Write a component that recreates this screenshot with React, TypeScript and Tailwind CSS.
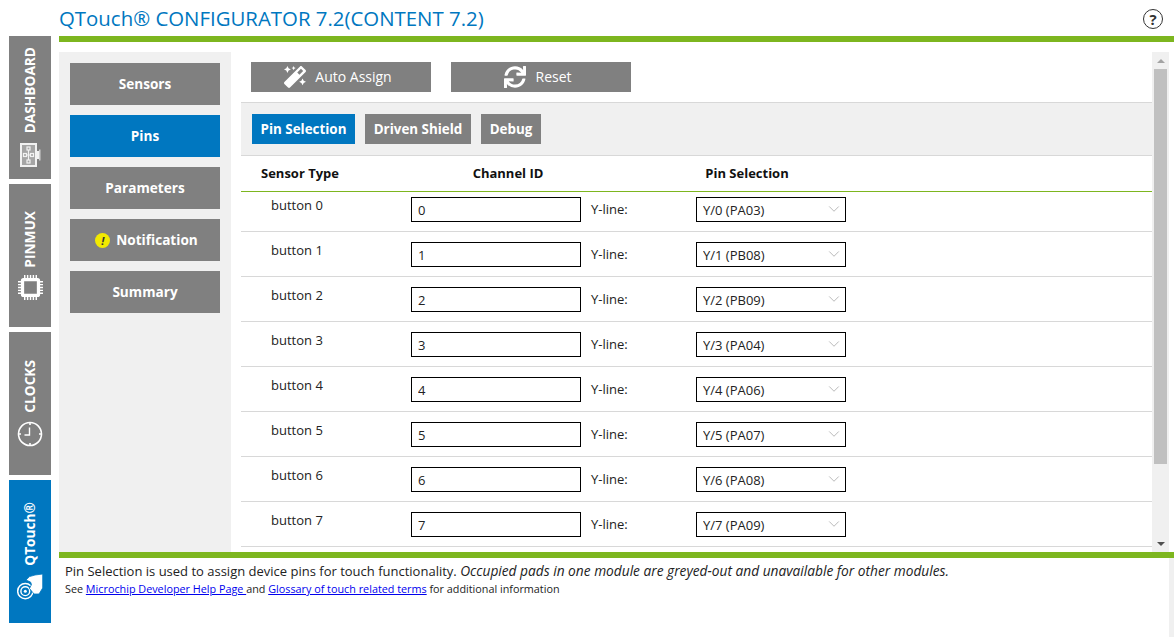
import { FaMagic, FaSync } from "react-icons/fa";
import { ChevronDown } from "lucide-react";

const rows = [
  { id: 0, pin: "Y/0 (PA03)" },
  { id: 1, pin: "Y/1 (PB08)" },
  { id: 2, pin: "Y/2 (PB09)" },
  { id: 3, pin: "Y/3 (PA04)" },
  { id: 4, pin: "Y/4 (PA06)" },
  { id: 5, pin: "Y/5 (PA07)" },
  { id: 6, pin: "Y/6 (PA08)" },
  { id: 7, pin: "Y/7 (PA09)" },
];

function BoardIcon() {
  return (
    <svg width="21" height="24" viewBox="0 0 21 24" fill="none" stroke="#f2f2f2">
      <rect x="1" y="1" width="15" height="22" strokeWidth="2" fill="#a6a6a6" />
      <path d="M17 8h2v8h-2z" fill="#f2f2f2" stroke="none" />
      <path d="M19 6.5h1.5v11H19z" fill="#d0d0d0" stroke="none" />
      <rect x="7" y="4" width="3" height="3" strokeWidth="1.2" />
      <rect x="3.5" y="10.5" width="3" height="3" strokeWidth="1.2" />
      <rect x="10.5" y="10.5" width="3" height="3" strokeWidth="1.2" />
      <rect x="7" y="17" width="3" height="3" strokeWidth="1.2" />
      <path d="M8.5 7v10M6.5 12h4" strokeWidth="1.2" />
    </svg>
  );
}

function ChipIcon() {
  return (
    <svg width="25" height="25" viewBox="0 0 26 26" fill="none" stroke="#fff">
      <rect x="4.7" y="4.7" width="16.6" height="16.6" rx="1" strokeWidth="3.4" />
      <path
        d="M7 0v4M10 0v4M13 0v4M16 0v4M19 0v4M7 22v4M10 22v4M13 22v4M16 22v4M19 22v4M0 7h4M0 10h4M0 13h4M0 16h4M0 19h4M22 7h4M22 10h4M22 13h4M22 16h4M22 19h4"
        strokeWidth="1.5"
      />
    </svg>
  );
}

function ClockIcon() {
  return (
    <svg width="26" height="26" viewBox="0 0 26 26" fill="none" stroke="#fff">
      <circle cx="13" cy="13" r="11.5" strokeWidth="1.6" />
      <path d="M13 1v3M13 22v3M1 13h3M22 13h3" strokeWidth="1.6" />
      <path d="M12.5 6.5v7.5h-5" strokeWidth="1.4" />
    </svg>
  );
}

function TouchIcon() {
  return (
    <svg width="26" height="26" viewBox="0 0 26 26" fill="none" stroke="#fff">
      <circle cx="8.3" cy="17.2" r="7.6" strokeWidth="1.5" />
      <circle cx="8.3" cy="17.2" r="4.4" strokeWidth="1.4" />
      <circle cx="8.3" cy="17.2" r="1.5" fill="#fff" stroke="none" />
      <path
        d="M12.5 2.6 L18 1 L25.7 0 L25.7 14 L22 20 L17 20 L12.5 14.5 L14.5 10.5 L13.5 8 L9 6 Z"
        fill="#fff"
        stroke="#0077c0"
        strokeWidth="0.8"
      />
    </svg>
  );
}

function SideTab({ label, icon, active, pad, gap }: { label: string; icon: React.ReactNode; active?: boolean; pad: string; gap: string }) {
  return (
    <div className={`w-[42px] h-[143px] flex flex-col items-center justify-end text-white ${pad} ${active ? "bg-[#0077c0]" : "bg-[#808080]"}`}>
      <span className={`[writing-mode:vertical-rl] [text-orientation:sideways] rotate-180 text-[13.7px] leading-[16px] font-bold ${gap}`}>{label}</span>
      {icon}
    </div>
  );
}

function MenuButton({ label, active, children }: { label: string; active?: boolean; children?: React.ReactNode }) {
  return (
    <div className={`h-[42px] flex items-center justify-center gap-[6px] text-white text-[13.6px] font-bold ${children ? "pt-[1px]" : ""} ${active ? "bg-[#0077c0]" : "bg-[#808080]"}`}>
      {children}
      {label}
    </div>
  );
}

function SubTab({ label, width, active }: { label: string; width: string; active?: boolean }) {
  return (
    <div className={`h-[30px] flex items-center justify-center text-white text-[13.4px] font-bold ${width} ${active ? "bg-[#0077c0]" : "bg-[#808080]"}`}>
      {label}
    </div>
  );
}

export default function App() {
  return (
    <div className="relative w-[1174px] h-[637px] bg-white overflow-hidden flex font-['Open_Sans',sans-serif] text-[#222]">
      {/* Left tabs */}
      <div className="ml-[9px] mt-[36px] w-[42px] flex flex-col gap-[5px]">
        <SideTab label="DASHBOARD" icon={<BoardIcon />} pad="pb-[12px]" gap="mb-[10px]" />
        <SideTab label="PINMUX" icon={<ChipIcon />} pad="pb-[27px]" gap="mb-[7px]" />
        <SideTab label="CLOCKS" icon={<ClockIcon />} pad="pb-[28px]" gap="mb-[8px]" />
        <SideTab label="QTouch®" icon={<TouchIcon />} active pad="pb-[23px]" gap="mb-[8px]" />
      </div>

      <div className="ml-[8px] flex-1 flex flex-col min-w-0">
        {/* Title */}
        <div className="h-[36px] flex items-center justify-between pr-[11px]">
          <span className="text-[20.4px] leading-[34px] text-[#0077c0] font-medium">QTouch® CONFIGURATOR 7.2(CONTENT 7.2)</span>
          <div className="mt-[2px] w-[20px] h-[20px] rounded-full border-[1.5px] border-[#333] flex items-center justify-center text-[15px] leading-none font-bold text-[#333]">
            ?
          </div>
        </div>
        <div className="h-[6px] bg-[#7db61f]" />

        <div className="h-[500px] mt-[10px] flex">
          {/* Menu */}
          <div className="w-[172px] bg-[#f0f0f0] pt-[11px] px-[11px] flex flex-col gap-[10px]">
            <MenuButton label="Sensors" />
            <MenuButton label="Pins" active />
            <MenuButton label="Parameters" />
            <MenuButton label="Notification">
              <span className="ml-[3px] w-[15px] h-[15px] rounded-full bg-[#f2ea00] flex items-center justify-center text-[11px] leading-none italic font-bold text-[#333]">
                !
              </span>
            </MenuButton>
            <MenuButton label="Summary" />
          </div>

          {/* Main */}
          <div className="ml-[10px] w-[911px] overflow-hidden">
            <div className="h-[50px] pl-[10px] pt-[10px] flex gap-[20px]">
              <div className="w-[180px] h-[30px] pr-[6px] pb-[1px] bg-[#808080] flex items-center justify-center gap-[9px] text-white text-[14px]">
                <FaMagic size={22} />
                Auto Assign
              </div>
              <div className="w-[180px] h-[30px] pr-[6px] pb-[1px] bg-[#808080] flex items-center justify-center gap-[9px] text-white text-[14px]">
                <FaSync size={22} />
                Reset
              </div>
            </div>
            <div className="h-[54px] bg-[#f0f0f0] border-y border-[#d8d8d8] pl-[11px] flex items-center gap-[10px]">
              <SubTab label="Pin Selection" width="w-[103px]" active />
              <SubTab label="Driven Shield" width="w-[106px]" />
              <SubTab label="Debug" width="w-[60px]" />
            </div>
            <div className="h-[36px] border-b border-[#7db61f] flex items-center text-[13px] font-bold text-[#111]">
              <span className="ml-[20px] w-[170px]">Sensor Type</span>
              <span className="w-[154px] text-center">Channel ID</span>
              <span className="ml-[87px] w-[150px] text-center">Pin Selection</span>
            </div>
            {rows.map((row) => (
              <div
                key={row.id}
                className={`border-b border-[#d8d8d8] flex text-[13px] leading-[18px] ${row.id === 0 ? "h-[40px] pt-[5px]" : "h-[45px] pt-[10px]"}`}
              >
                <span className="ml-[30px] w-[140px] mt-[-1px]">button {row.id}</span>
                <input
                  readOnly
                  value={row.id}
                  className="w-[170px] h-[25px] border border-black px-[6px] text-[13px] outline-none"
                />
                <span className="ml-[10px] w-[105px] leading-[25px]">Y-line:</span>
                <div className="relative w-[150px] h-[25px]">
                  <select
                    value={row.pin}
                    onChange={() => {}}
                    className="w-full h-full border border-black bg-white px-[6px] text-[13px] appearance-none outline-none"
                  >
                    <option>{row.pin}</option>
                  </select>
                  <ChevronDown size={18} strokeWidth={1.1} className="absolute right-[3px] top-[3px] text-[#aaa] pointer-events-none" />
                </div>
              </div>
            ))}
          </div>

          {/* Scrollbar */}
          <div className="w-[17px] bg-[#f0f0f0] flex flex-col items-center">
            <div className="h-[17px] flex items-center justify-center">
              <div className="w-0 h-0 border-x-[4px] border-x-transparent border-b-[4px] border-b-[#a3a3a3]" />
            </div>
            <div className="w-[13px] h-[395px] bg-[#c0c0c0]" />
            <div className="flex-1" />
            <div className="h-[17px] flex items-center justify-center">
              <div className="w-0 h-0 border-x-[4px] border-x-transparent border-t-[4px] border-t-[#505050]" />
            </div>
          </div>
          <div className="flex-1" />
        </div>

        <div className="h-[6px] bg-[#7db61f]" />

        {/* Footer help */}
        <div className="flex-1 flex">
          <div className="w-[1110px] pl-[6px] pt-[4px]">
            <p className="text-[13px] leading-[18px]">
              Pin Selection is used to assign device pins for touch functionality.{" "}
              <em className="text-[13.73px]">Occupied pads in one module are greyed-out and unavailable for other modules.</em>
            </p>
            <p className="text-[10.8px] leading-[18px]">
              See <a href="#" className="text-[#0000ee] underline">Microchip Developer Help Page </a> and{" "}
              <a href="#" className="text-[#0000ee] underline">Glossary of touch related terms</a> for additional information
            </p>
          </div>
          <div className="flex-1" />
          <div className="w-[5px] bg-[#f0f0f0]" />
        </div>
      </div>
    </div>
  );
}
